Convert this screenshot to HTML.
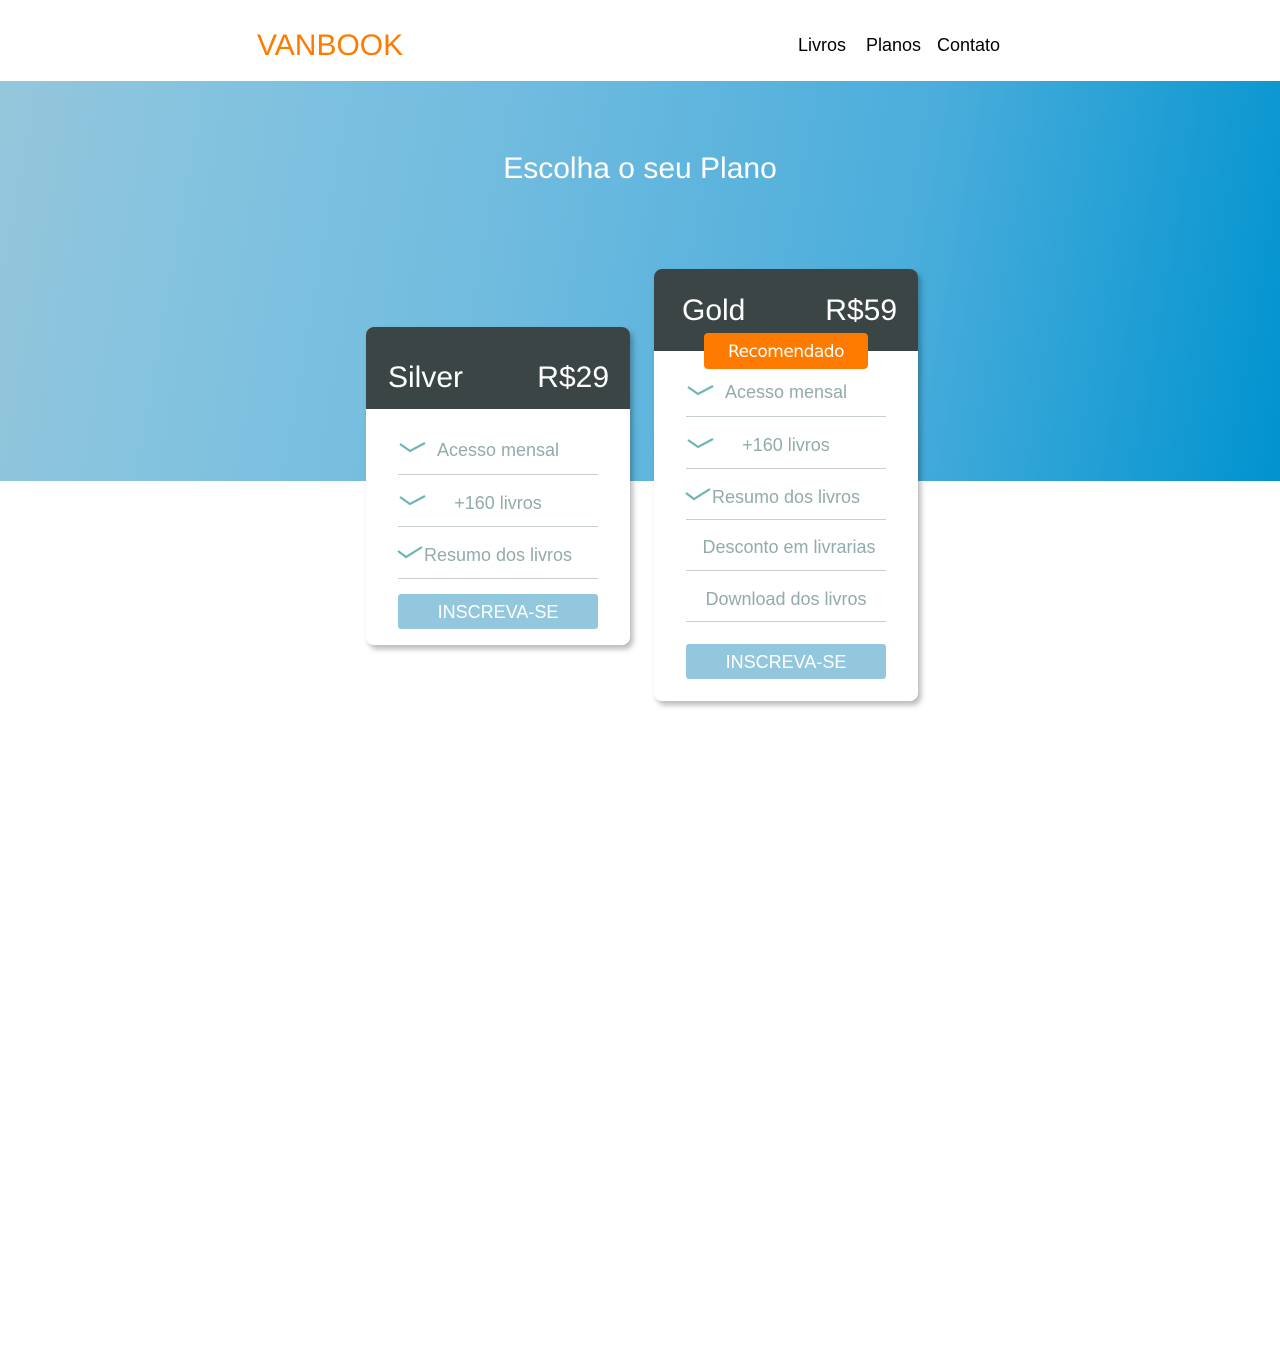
<!DOCTYPE html>
<html><head><meta charset="utf-8"><style>
*{margin:0;padding:0;box-sizing:border-box}
body{width:1280px;height:1345px;background:#fff;font-family:"Liberation Sans",sans-serif;position:relative;overflow:hidden}
.abs{position:absolute}
.logo{left:257px;top:28px;font-size:30px;color:#ff7b00;line-height:36px}
.nav{top:34px;font-size:18px;color:#000;line-height:22px}
.hero{left:0;top:81px;width:1280px;height:400px;background:linear-gradient(100deg,#95c6db 0%,#85c3df 15%,#6fbbdf 40%,#4aaddb 70%,#0093cf 100%)}
.title{left:0;top:151px;width:1280px;text-align:center;color:#fff;font-size:30px;line-height:36px}
.card{background:#fff;border-radius:8px;box-shadow:3px 4px 6px rgba(0,0,0,.28);overflow:hidden}
.head{background:#3c4546;color:#fff;position:absolute;left:0;top:0;width:100%}
.head span{position:absolute;font-size:30px;line-height:36px}
.item{position:absolute;height:1px;background:#c8cfcf;width:200px}
.txt{position:absolute;font-size:18px;color:#93abab;line-height:22px;width:200px;text-align:center}
.chk{position:absolute;width:28px;height:14px}
.btn{position:absolute;width:200px;height:35px;background:#92c7de;border-radius:3px;color:#fff;font-size:18px;text-align:center;line-height:37px}
.badge{left:704px;top:333px;width:164px;height:36px;background:#ff7b00;border-radius:4px;color:#fff;font-size:17px;text-align:center;line-height:39px;font-family:"DejaVu Sans","Liberation Sans",sans-serif;letter-spacing:-.5px}
</style></head><body>
<div class="abs logo">VANBOOK</div>
<div class="abs nav" style="left:798px">Livros</div>
<div class="abs nav" style="left:866px">Planos</div>
<div class="abs nav" style="left:937px">Contato</div>
<div class="abs hero"></div>
<div class="abs title">Escolha o seu Plano</div>

<div class="abs card" style="left:366px;top:327px;width:264px;height:318px">
 <div class="head" style="height:82px"><span style="left:22px;top:33px">Silver</span><span style="right:21px;top:33px">R$29</span></div>
 <svg class="chk" style="left:33px;top:114px" viewBox="0 0 28 14"><path d="M1 3 L11 10 L26 2" stroke="#6fb5b5" stroke-width="2.2" fill="none"/></svg>
 <div class="txt" style="left:32px;top:112px">Acesso mensal</div>
 <div class="item" style="left:32px;top:147px"></div>
 <svg class="chk" style="left:33px;top:167px" viewBox="0 0 28 14"><path d="M1 3 L11 10 L26 2" stroke="#6fb5b5" stroke-width="2.2" fill="none"/></svg>
 <div class="txt" style="left:32px;top:165px">+160 livros</div>
 <div class="item" style="left:32px;top:199px"></div>
 <svg class="chk" style="left:31px;top:219px" viewBox="0 0 28 14"><path d="M1 5 L9 11 L25 1" stroke="#6fb5b5" stroke-width="2.2" fill="none"/></svg>
 <div class="txt" style="left:36px;top:217px;padding-left:22px;text-align:left">Resumo dos livros</div>
 <div class="item" style="left:32px;top:251px"></div>
 <div class="btn" style="left:32px;top:267px">INSCREVA-SE</div>
</div>

<div class="abs card" style="left:654px;top:269px;width:264px;height:432px">
 <div class="head" style="height:82px"><span style="left:28px;top:24px">Gold</span><span style="right:21px;top:24px">R$59</span></div>
 <svg class="chk" style="left:33px;top:115px" viewBox="0 0 28 14"><path d="M1 3 L11 10 L26 2" stroke="#6fb5b5" stroke-width="2.2" fill="none"/></svg>
 <div class="txt" style="left:32px;top:112px">Acesso mensal</div>
 <div class="item" style="left:32px;top:147px"></div>
 <svg class="chk" style="left:33px;top:168px" viewBox="0 0 28 14"><path d="M1 3 L11 10 L26 2" stroke="#6fb5b5" stroke-width="2.2" fill="none"/></svg>
 <div class="txt" style="left:32px;top:165px">+160 livros</div>
 <div class="item" style="left:32px;top:199px"></div>
 <svg class="chk" style="left:31px;top:219px" viewBox="0 0 28 14"><path d="M1 5 L9 11 L25 1" stroke="#6fb5b5" stroke-width="2.2" fill="none"/></svg>
 <div class="txt" style="left:36px;top:217px;padding-left:22px;text-align:left">Resumo dos livros</div>
 <div class="item" style="left:32px;top:250px"></div>
 <div class="txt" style="left:35px;top:267px">Desconto em livrarias</div>
 <div class="item" style="left:32px;top:301px"></div>
 <div class="txt" style="left:32px;top:319px">Download dos livros</div>
 <div class="item" style="left:32px;top:352px"></div>
 <div class="btn" style="left:32px;top:375px">INSCREVA-SE</div>
</div>
<div class="abs badge">Recomendado</div>
</body></html>
